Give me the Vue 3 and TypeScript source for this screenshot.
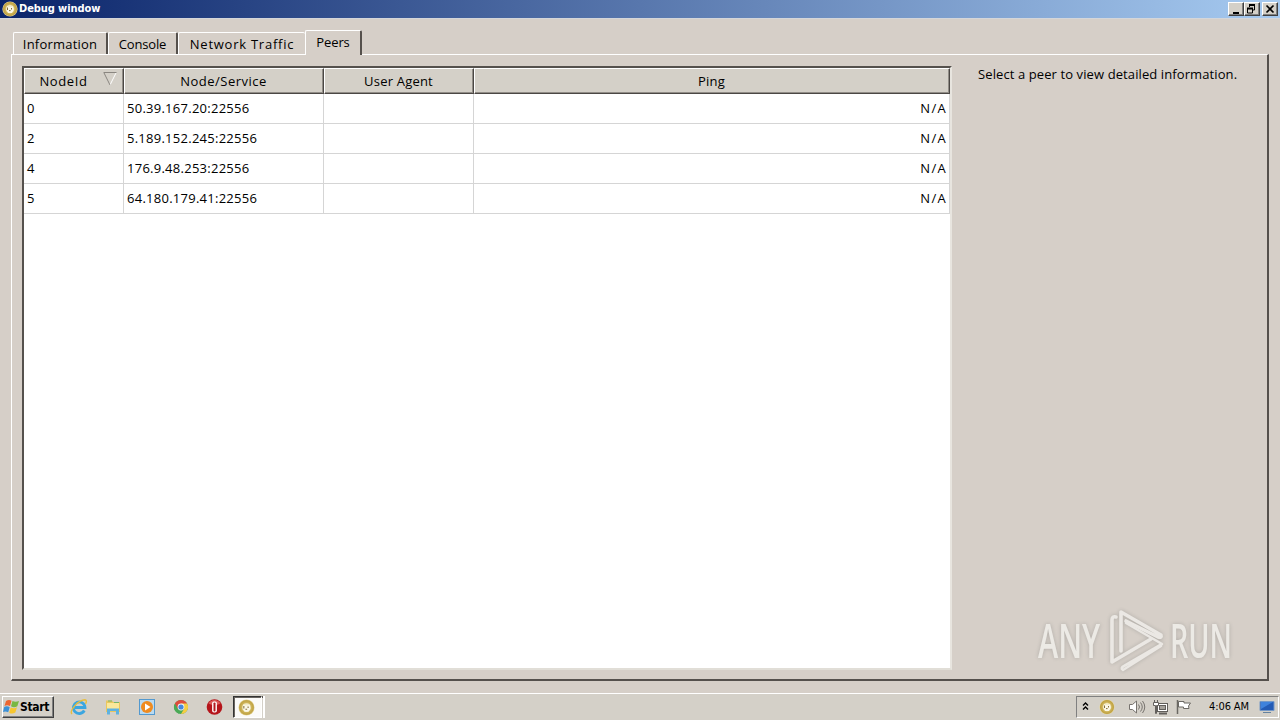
<script setup lang="ts">
interface Peer {
  id: number
  address: string
  agent: string
  ping: string
}

const tabs = [
  { key: 'information', label: 'Information' },
  { key: 'console', label: 'Console' },
  { key: 'traffic', label: 'Network Traffic' },
  { key: 'peers', label: 'Peers' },
]
const activeTab = 'peers'

const peers: Peer[] = [
  { id: 0, address: '50.39.167.20:22556', agent: '', ping: 'N/A' },
  { id: 2, address: '5.189.152.245:22556', agent: '', ping: 'N/A' },
  { id: 4, address: '176.9.48.253:22556', agent: '', ping: 'N/A' },
  { id: 5, address: '64.180.179.41:22556', agent: '', ping: 'N/A' },
]
</script>

<template>
  <div class="desktop">
    <svg class="defs" width="0" height="0">
      <defs>
        <radialGradient id="gold">
          <stop offset="0.45" stop-color="#f3ebc8" />
          <stop offset="0.62" stop-color="#cdb358" />
          <stop offset="0.85" stop-color="#c0a243" />
          <stop offset="1" stop-color="#e9dca6" />
        </radialGradient>
        <symbol id="coin" viewBox="0 0 16 16">
          <circle cx="8" cy="8" r="7.6" fill="url(#gold)" />
          <path d="M5 5l1.5 1h3L11 5l.6 4.2L9.8 12H6.2L4.6 9z" fill="#fbf8e8" />
          <path d="M5.500 6.500v2.500M9.500 7v1.500M7 9.600h1.600" stroke="#86703a" fill="none" />
        </symbol>
      </defs>
    </svg>

    <header class="titlebar">
      <svg class="app-icon" width="16" height="16"><use href="#coin" /></svg>
      <span class="title">Debug window</span>
      <div class="controls">
        <button class="ctl">
          <svg width="12" height="10"><path d="M3 9h6" stroke="#000" stroke-width="2" /></svg>
        </button>
        <button class="ctl">
          <svg width="12" height="10" fill="none" stroke="#000">
            <path d="M3.500 3V1.500h5V6H7" /><path d="M3 1h6M1 4.500h6" stroke-width="2" /><path d="M1.500 4v5h5V4" />
          </svg>
        </button>
        <button class="ctl close">
          <svg width="12" height="10"><path d="M2.500 1.500l7 7M9.500 1.500l-7 7" stroke="#000" stroke-width="1.700" /></svg>
        </button>
      </div>
    </header>

    <main class="window">
      <nav class="tabs">
        <div v-for="t in tabs" :key="t.key" class="tab" :class="[t.key, { active: t.key === activeTab }]">
          <span>{{ t.label }}</span>
        </div>
      </nav>

      <section class="panel">
        <div class="table">
          <div class="row head">
            <div class="cell">
              <span class="h-node">NodeId</span>
              <svg class="sort" width="14" height="14" fill="none">
                <path d="M13 1L7 13" stroke="#fff" /><path d="M13.500.5H.8L7 13" stroke="#8a8680" />
              </svg>
            </div>
            <div class="cell"><span class="h-service">Node/Service</span></div>
            <div class="cell"><span class="h-agent">User Agent</span></div>
            <div class="cell"><span class="h-ping">Ping</span></div>
          </div>
          <div v-for="p in peers" :key="p.id" class="row">
            <div class="cell">{{ p.id }}</div>
            <div class="cell">{{ p.address }}</div>
            <div class="cell">{{ p.agent }}</div>
            <div class="cell ping">{{ p.ping }}</div>
          </div>
        </div>
        <aside class="detail">Select a peer to view detailed information.</aside>
      </section>
    </main>

    <div class="watermark">
      <span class="wm-text any">ANY</span>
      <svg width="58" height="64" viewBox="0 0 58 64" fill="none" stroke="#efede9" stroke-width="3.600" stroke-linejoin="round" stroke-linecap="round">
        <path d="M7 9Q3 8 3 12V54L42 31" />
        <path d="M12 43V4L52 27Q53 30 49 29L17 13" />
        <path d="M17 15L53 36L15 58Q11 60 14 62L52 38" stroke-width="2.600" />
      </svg>
      <span class="wm-text run">RUN</span>
    </div>

    <footer class="taskbar">
      <button class="start">
        <svg width="17" height="16" viewBox="0 0 17 16">
          <path d="M3 2Q6 0 8.500 1.800L7 7Q4 5.300 1.500 7z" fill="#ed6631" />
          <path d="M9.500 2Q12.500 3.500 16 2L14.300 7.300Q11 9 8 7.300z" fill="#79b843" />
          <path d="M1.200 8Q4 6.500 6.700 8.200L5.200 13.300Q2.500 12 0 13z" fill="#3c91d7" />
          <path d="M7.700 8.400Q11 10 14 8.300L12.300 13.600Q9 15.500 6.200 13.700z" fill="#f7c62f" />
        </svg>
        <span>Start</span>
      </button>

      <div class="launch">
        <svg width="18" height="18" viewBox="0 0 18 18" fill="none">
          <path d="M14.300 12.500A5.800 5.800 0 1 1 15 9.500H5" stroke="#3ba6e0" stroke-width="2.800" />
          <path d="M2 16C-1 13 8 2 15 1.800c2 .2 1.500 2.500.5 4" stroke="#e8bd3c" stroke-width="1.400" />
        </svg>
        <svg width="18" height="18" viewBox="0 0 18 18">
          <path d="M2 2.500h6l1 1.500h7V14H2z" fill="#e9c75e" />
          <path d="M3 5h12v7H3z" fill="#fae89a" />
          <path d="M4 3h4M10 4.500h5" stroke="#76b56b" />
          <path d="M3 16.500v-6h12v6h-3v-3.500H6v3.500z" fill="#5fb2e0" />
        </svg>
        <svg width="18" height="18" viewBox="0 0 18 18">
          <rect x="1.500" y="1.500" width="15" height="15" fill="#b9daf1" stroke="#5399cf" />
          <circle cx="9" cy="9" r="6" fill="#ef8b20" />
          <path d="M7 5.500v7l5.500-3.500z" fill="#fff" />
        </svg>
        <svg width="18" height="18" viewBox="0 0 18 18">
          <circle cx="9" cy="9" r="7" fill="#4aa956" />
          <path d="M9 9L2.900 5.500A7 7 0 0 1 15.100 5.500z" fill="#de4b3c" />
          <path d="M9 5.500h6.100A7 7 0 0 1 9 16l3-5z" fill="#f6cd42" />
          <path d="M2.900 5.500L6 11l3-3V5z" fill="#de4b3c" />
          <path d="M2.600 6L6 12l3 0-2 3.700A7 7 0 0 1 2.600 6z" fill="#4aa956" />
          <circle cx="9" cy="9" r="3.400" fill="#f5f5f5" /><circle cx="9" cy="9" r="2.600" fill="#4587dc" />
        </svg>
        <svg width="18" height="18" viewBox="0 0 18 18">
          <circle cx="8.500" cy="9" r="7.800" fill="#b5151b" />
          <path d="M2.500 5.500A7 7 0 0 1 14.500 5.500Q8.500 9 2.500 5.500z" fill="#dc5a58" />
          <rect x="6.100" y="3.500" width="4.800" height="11" rx="1.800" fill="#fff" />
          <rect x="7.500" y="4.500" width="2" height="9" rx="0.800" fill="#b3191e" />
        </svg>
      </div>

      <div class="task">
        <svg width="17" height="17"><use href="#coin" /></svg>
      </div>
      <div class="task-edge"></div>

      <div class="tray">
        <svg class="chev" width="8" height="10" fill="none" stroke="#000" stroke-width="1.400"><path d="M1 4.500l2.500-2.500L6 4.500M1 8.500L3.500 6 6 8.500" /></svg>
        <svg class="t-coin" width="16" height="16"><use href="#coin" /></svg>
        <svg class="t-vol" width="18" height="16" fill="none" stroke="#77736e">
          <path d="M1.500 5.500h3L8.500 2v12l-4-3.500h-3z" fill="#fff" /><path d="M10.500 5.500q2 2.500 0 5M12.500 3.500q3.500 4.500 0 9M14.500 2q4.500 6 0 12" />
        </svg>
        <svg class="t-net" width="18" height="17" stroke="#625f5b" fill="#fff">
          <rect x="5.500" y="4.500" width="10" height="8" /><rect x="7.500" y="6.500" width="6" height="4" fill="#a5a19a" /><path d="M7 14.500h8" stroke-width="2" />
          <path d="M1.500 3.500h5v3h-2v8h-1v-8h-2zM2.500 3V1M5.500 3V1" />
        </svg>
        <svg class="t-flag" width="18" height="16" stroke="#6b6863" fill="#fff"><path d="M3.500 2.500h5.500v1.500h6.500l-2 3 .5 2.500h-5.500v-1.500h-5z" /><path d="M2.500 1v14" stroke-width="1.500" /></svg>
        <span class="clock">4:06 AM</span>
        <svg class="t-desk" width="16" height="14"><path d="M1 1.500h14v9H1z" fill="#245bb5" stroke="#7598c6" /><path d="M2 2h12L2 9z" fill="#3f82dc" /><path d="M4 12.500h8" stroke="#65829f" /></svg>
      </div>
    </footer>
  </div>
</template>

<style>
body { margin: 0; overflow: hidden; }
</style>

<style scoped>
* { box-sizing: border-box; }
.desktop {
  width: 1280px; height: 720px; display: flex; flex-direction: column; position: relative;
  background: #d6cfc8; color: #000; font: 13px/18px "Open Sans", "Noto Sans", sans-serif; white-space: nowrap;
}
.defs { position: absolute; }
svg { display: block; flex: none; }
button { padding: 0; margin: 0; border-radius: 0; color: #000; }
.titlebar {
  height: 18px; flex: none; display: flex; align-items: center; padding: 0 2px;
  background: linear-gradient(90deg, #0a246a, #a6caf0);
}
.title { margin-left: 1px; color: #fff; font: bold 11px/18px "DejaVu Sans Condensed", "DejaVu Sans", sans-serif; font-stretch: condensed; letter-spacing: -0.080px; }
.controls { margin-left: auto; display: flex; }
.ctl {
  width: 16px; height: 14px; display: flex; align-items: center; justify-content: center; background: #d4d0c8;
  border: 1px solid; border-color: #fff #404040 #404040 #fff; box-shadow: inset -1px -1px #808080;
}
.ctl.close { margin-left: 2px; }

.window { height: 675px; flex: none; display: flex; flex-direction: column; padding: 12px 11px 0; border-top: 1px solid #d4d6da; }
.tabs { display: flex; align-items: flex-end; height: 23px; padding-left: 2px; flex: none; }
.tab {
  height: 22px; display: flex; align-items: center; justify-content: center;
  border: 1px solid #fff; border-right: 2px solid #55504c; border-bottom: 0; border-radius: 2px 2px 0 0;
}
.information { width: 95px; letter-spacing: 0.200px; }
.console { width: 70px; letter-spacing: -0.150px; }
.traffic { width: 127px; letter-spacing: 0.750px; border-right: 0; }
.peers { width: 57px; letter-spacing: -0.100px; }
.tab.active { height: 25px; margin-bottom: -1px; background: #d6cfc8; z-index: 1; padding-bottom: 2px; }
.panel {
  height: 627px; display: flex; justify-content: space-between; padding: 10px 29px 0 10px;
  border: 1px solid #fff; border-right: 2px solid #55504c; border-bottom: 2px solid #55504c;
}
.table {
  width: 930px; height: 604px; margin-top: 1px; background: #fff;
  border: 2px solid; border-color: #55514d #fff #fff #55514d; border-right-color: #e8e5df; border-bottom-color: #e1ded7;
}
.row { display: grid; grid-template-columns: 100px 200px 150px 476px; height: 30px; }
.cell { display: flex; align-items: center; padding: 0 3px 2px; border-right: 1px solid #d5d5d5; border-bottom: 1px solid #d5d5d5; letter-spacing: 0.260px; }
.ping { justify-content: flex-end; letter-spacing: 1.300px; padding-right: 2px; }
.head { height: 26px; }
.head .cell {
  justify-content: center; padding: 0 4px 0 3px; background: #d4d0c8; letter-spacing: 0.200px;
  border: 1px solid; border-color: #fff #4b4744 #4b4744 #fff; box-shadow: inset -1px -1px #918d87;
}
.head .h-node { letter-spacing: 0.600px; }
.head .h-service { letter-spacing: 0.500px; }
.sort { margin: -4px -9px 0 15px; }
.detail { width: 260px; letter-spacing: 0.100px; }

.watermark { position: absolute; left: 1038px; top: 608px; display: flex; align-items: center; filter: drop-shadow(0 0 2px #a9a6a1); opacity: 0.850; }
.wm-text { width: 66px; color: #f1efeb; font: 600 47px/64px "Open Sans", sans-serif; transform: scaleX(0.650); transform-origin: left; }
.any { margin-right: 5px; }
.run { margin-left: 3px; transform: scaleX(0.610); }

.taskbar { height: 27px; display: flex; align-items: flex-start; border-top: 1px solid #fff; padding: 2px 1px 0 2px; background: #d4d0c8; }
.start {
  width: 52px; height: 22px; display: flex; align-items: center; background: #d4d0c8;
  border: 1px solid; border-color: #fff #404040 #404040 #fff; box-shadow: inset -1px -1px #808080;
  font: bold 12px/18px "DejaVu Sans Condensed", "DejaVu Sans", sans-serif; letter-spacing: -0.300px;
}
.launch { display: flex; gap: 16px; margin: 2px 0 0 16px; }
.task {
  width: 29px; height: 22px; margin-left: 9px; padding-right: 2px; display: flex; align-items: center; justify-content: center; background: #fbfaf8;
  border: 1px solid; border-color: #333 #fff #fff #333; box-shadow: inset 1px 1px #696560;
}
.task-edge { width: 3px; height: 22px; border-right: 2px solid #fff; background: linear-gradient(#55514d 2px, #d4d0c8 2px); }
.tray {
  width: 203px; height: 22px; margin-left: auto; display: flex; align-items: center;
  border: 1px solid; border-color: #808080 #fff #fff #808080;
}
.chev { margin: -2px 0 0 5px; }
.t-coin { margin-left: 9px; }
.t-vol { margin-left: 13px; }
.t-net { margin-left: 6px; }
.t-flag { margin-left: 5px; }
.clock { margin-left: 16px; width: 42px; font: 11px/18px "DejaVu Sans Condensed", "DejaVu Sans", sans-serif; letter-spacing: -0.100px; }
.t-desk { margin-left: 8px; }
</style>
